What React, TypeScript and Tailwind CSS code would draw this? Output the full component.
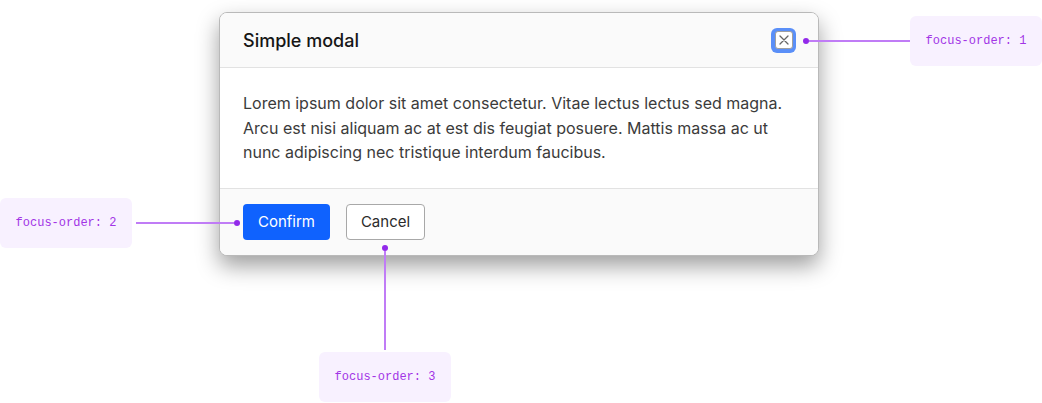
import React from 'react';

const Label = ({ text }: { text: string }) => (
  <div className="flex h-[50px] w-[132px] shrink-0 items-center justify-center rounded-[6px] bg-[#f8f1ff] font-['Liberation_Mono','Courier_New',monospace] text-[12px] text-[#a235e6]">
    {text}
  </div>
);

const Dot = () => <div className="h-[6px] w-[6px] shrink-0 rounded-full bg-[#9229ea]" />;

const App = () => {
  return (
    <div className="relative h-[403px] w-[1042px] overflow-hidden bg-white font-['Inter',sans-serif]">
      <div className="pl-[219px] pt-[12px]">
        <div className="w-[600px] overflow-hidden rounded-[8px] border border-[#b9b9b9] bg-white shadow-[0_10px_22px_rgba(0,0,0,0.38)]">
          <div className="flex h-[55px] items-center justify-between border-b border-[#e2e2e2] bg-[#fafafa] pl-[23px] pr-[22px]">
            <h2 className="text-[18px] font-medium text-[#161616]">Simple modal</h2>
            <button className="flex h-[25px] w-[25px] items-center justify-center rounded-[6px] bg-[#5a8ff8]">
              <span className="flex h-[18px] w-[18px] items-center justify-center rounded-[3px] border border-[#a0a0a0] bg-white">
                <svg width="12" height="12" viewBox="0 0 12 12" fill="none">
                  <path d="M2 2L10 10M10 2L2 10" stroke="#666" strokeWidth="1.3" strokeLinecap="round" />
                </svg>
              </span>
            </button>
          </div>
          <div className="h-[120px] px-[23px] pt-[23px] text-[16px] leading-[24.5px] text-[#3b3b3b]">
            Lorem ipsum dolor sit amet consectetur. Vitae lectus lectus sed magna. Arcu est nisi aliquam ac at est dis feugiat posuere. Mattis massa ac ut nunc adipiscing nec tristique interdum faucibus.
          </div>
          <div className="flex h-[67px] items-start gap-[16px] border-t border-[#e2e2e2] bg-[#fafafa] pl-[23px] pt-[15px]">
            <button className="h-[36px] w-[87px] rounded-[4px] bg-[#0f62fe] text-[15px] text-white">Confirm</button>
            <button className="h-[36px] w-[79px] rounded-[4px] border border-[#a8a8a8] bg-white text-[15px] text-[#2b2b2b]">
              Cancel
            </button>
          </div>
        </div>
      </div>

      {/* annotation 1 */}
      <div className="absolute left-[803px] top-[16px] flex items-center">
        <Dot />
        <div className="h-[2px] w-[101px] bg-[#c07cf6]" />
        <Label text="focus-order: 1" />
      </div>

      {/* annotation 2 */}
      <div className="absolute left-0 top-[198px] flex items-center">
        <Label text="focus-order: 2" />
        <div className="ml-[4px] h-[2px] w-[98px] bg-[#c07cf6]" />
        <Dot />
      </div>

      {/* annotation 3 */}
      <div className="absolute left-[319px] top-[245px] flex w-[132px] flex-col items-center">
        <Dot />
        <div className="h-[99px] w-[2px] bg-[#c07cf6]" />
        <div className="mt-[2px]">
          <Label text="focus-order: 3" />
        </div>
      </div>
    </div>
  );
};

export default App;
